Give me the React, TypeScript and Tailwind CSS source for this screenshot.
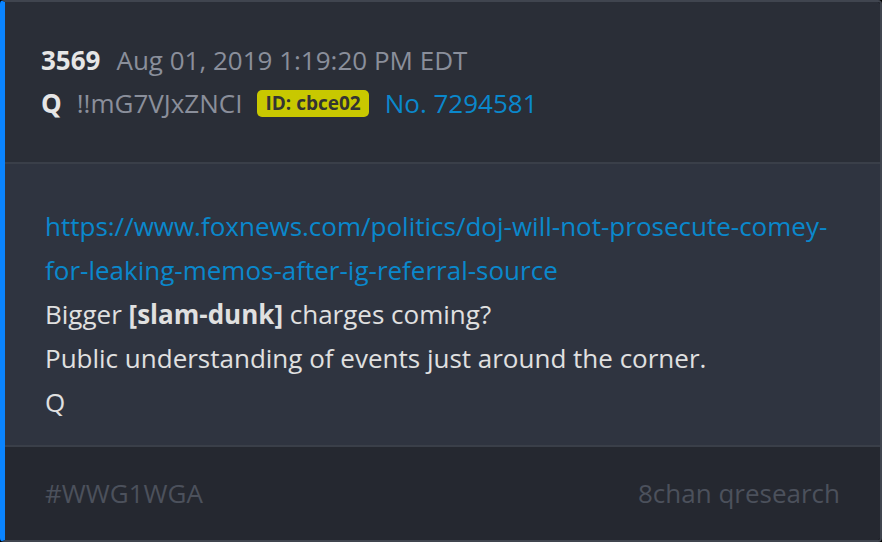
import React from "react";

export default function App() {
  return (
    <div className="w-[882px] h-[542px] bg-black" style={{ fontFamily: '"Open Sans", sans-serif' }}>
      <div className="w-full h-full flex flex-col rounded-[4px] overflow-hidden border-t-2 border-r-2 border-b-2 border-l-[5px] border-t-[#40454f] border-r-[#40454f] border-b-[#40454f] border-l-[#0a84ff]">
        <div className="bg-[#2a2e37] h-[162px] shrink-0 pl-[36px] pt-[37px] border-b-2 border-[#3a3f49]">
          <div className="flex items-center h-[43px] text-[26px]">
            <span className="font-bold text-[#e6e6e6]">3569</span>
            <span className="ml-[16px] text-[#8a8f9b]">Aug 01, 2019 1:19:20 PM EDT</span>
          </div>
          <div className="flex items-center h-[43px] text-[26px]">
            <span className="font-bold text-[#e6e6e6]">Q</span>
            <span className="ml-[15px] text-[#8a8f9b]">!!mG7VJxZNCI</span>
            <span className="ml-[15px] bg-[#c8c800] text-[#333333] font-bold text-[19px] leading-[27px] px-[8px] rounded-[5px]">ID: cbce02</span>
            <span className="ml-[16px] text-[#0a88cc]">No. 7294581</span>
          </div>
        </div>
        <div className="bg-[#2f3440] h-[283px] shrink-0 pl-[40px] pt-[40px] text-[26px] leading-[44px] text-[#e0e0e0] border-b-2 border-[#3a3f49]">
          <div className="text-[#0a88cc] whitespace-nowrap">
            https://www.foxnews.com/politics/doj-will-not-prosecute-comey-<br />for-leaking-memos-after-ig-referral-source
          </div>
          <div>
            Bigger <b className="font-bold">[slam-dunk]</b> charges coming?
          </div>
          <div>Public understanding of events just around the corner.</div>
          <div>Q</div>
        </div>
        <div className="bg-[#252830] flex-1 flex items-center justify-between pl-[40px] pr-[40px] text-[26px] text-[#4c515c]">
          <span>#WWG1WGA</span>
          <span>8chan qresearch</span>
        </div>
      </div>
    </div>
  );
}
